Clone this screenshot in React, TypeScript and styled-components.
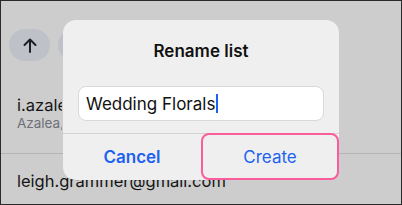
import React from "react";
import styled, { createGlobalStyle } from "styled-components";

const Global = createGlobalStyle`
  html, body { margin: 0; padding: 0; background: #cdcdcd; }
  * { box-sizing: border-box; }
`;

const Frame = styled.div`
  position: relative;
  width: 402px;
  height: 205px;
  border: 1px solid #2a2a2a;
  background: #cdcdcd;
  overflow: hidden;
  font-family: Inter, "Liberation Sans", sans-serif;
  display: flex;
  flex-direction: column;
`;

const Toolbar = styled.div`
  display: flex;
  gap: 8px;
  padding: 28px 0 0 8px;
`;

const Pill = styled.div`
  width: 41px;
  height: 32px;
  border-radius: 16px;
  background: #bec1c8;
  display: flex;
  align-items: center;
  justify-content: center;
  color: #1c1f26;
`;

const Row = styled.div<{ $top: number; $clip?: boolean }>`
  padding: ${(p) => p.$top}px 0 0 16px;
  display: flex;
  flex-direction: column;
  width: ${(p) => (p.$clip ? "61px" : "auto")};
  overflow: hidden;
`;

const Name = styled.div`
  font-size: 16.5px;
  line-height: 20px;
  color: #151515;
  white-space: nowrap;
`;

const Sub = styled.div`
  font-size: 13.5px;
  line-height: 16px;
  color: #6d7079;
  white-space: nowrap;
`;

const Separator = styled.div`
  margin-top: 22px;
  height: 1px;
  background: #b4b4b4;
`;

const Dialog = styled.div`
  position: absolute;
  left: 62px;
  top: 19px;
  width: 276px;
  height: 160px;
  border-radius: 13px;
  background: #efefef;
  display: flex;
  flex-direction: column;
  align-items: stretch;
`;

const Title = styled.div`
  padding-top: 21px;
  text-align: center;
  font-size: 17px;
  font-weight: 600;
  line-height: 21px;
  color: #111;
`;

const Field = styled.div`
  margin: 24px 15px 0 15px;
  height: 35px;
  border: 1px solid #d9d9d9;
  border-radius: 8px;
  background: #fff;
  display: flex;
  align-items: center;
  padding-left: 7px;
  font-size: 17px;
  color: #111;
`;

const Caret = styled.span`
  display: inline-block;
  width: 2px;
  height: 19px;
  margin-left: 1px;
  background: #1a66f0;
`;

const Actions = styled.div`
  margin-top: 12px;
  border-top: 1px solid #d3d3d3;
  display: grid;
  grid-template-columns: 1fr 1fr;
  flex: 1;
`;

const Action = styled.div<{ $bold?: boolean; $highlight?: boolean }>`
  display: flex;
  align-items: center;
  justify-content: center;
  font-size: 17px;
  font-weight: ${(p) => (p.$bold ? 600 : 400)};
  color: #1c62ef;
  border: ${(p) => (p.$highlight ? "2px solid #fb5c9c" : "none")};
  border-radius: 8px;
  margin-top: ${(p) => (p.$highlight ? "-1px" : "0")};
`;

export default function App() {
  return (
    <>
      <Global />
      <Frame>
        <Toolbar>
          <Pill>
            <svg width="14" height="15" viewBox="0 0 14 15" fill="none" stroke="currentColor" strokeWidth="2" strokeLinecap="round" strokeLinejoin="round">
              <path d="M7 14V1.5M1.5 7L7 1.5L12.5 7" />
            </svg>
          </Pill>
          <Pill />
        </Toolbar>
        <Row $top={34} $clip>
          <Name>i.azalea@gmail.com</Name>
          <Sub>Azalea, Wedding</Sub>
        </Row>
        <Separator />
        <Row $top={17}>
          <Name>leigh.grammer@gmail.com</Name>
        </Row>
        <Dialog>
          <Title>Rename list</Title>
          <Field>
            Wedding Florals
            <Caret />
          </Field>
          <Actions>
            <Action $bold>Cancel</Action>
            <Action $highlight>Create</Action>
          </Actions>
        </Dialog>
      </Frame>
    </>
  );
}
